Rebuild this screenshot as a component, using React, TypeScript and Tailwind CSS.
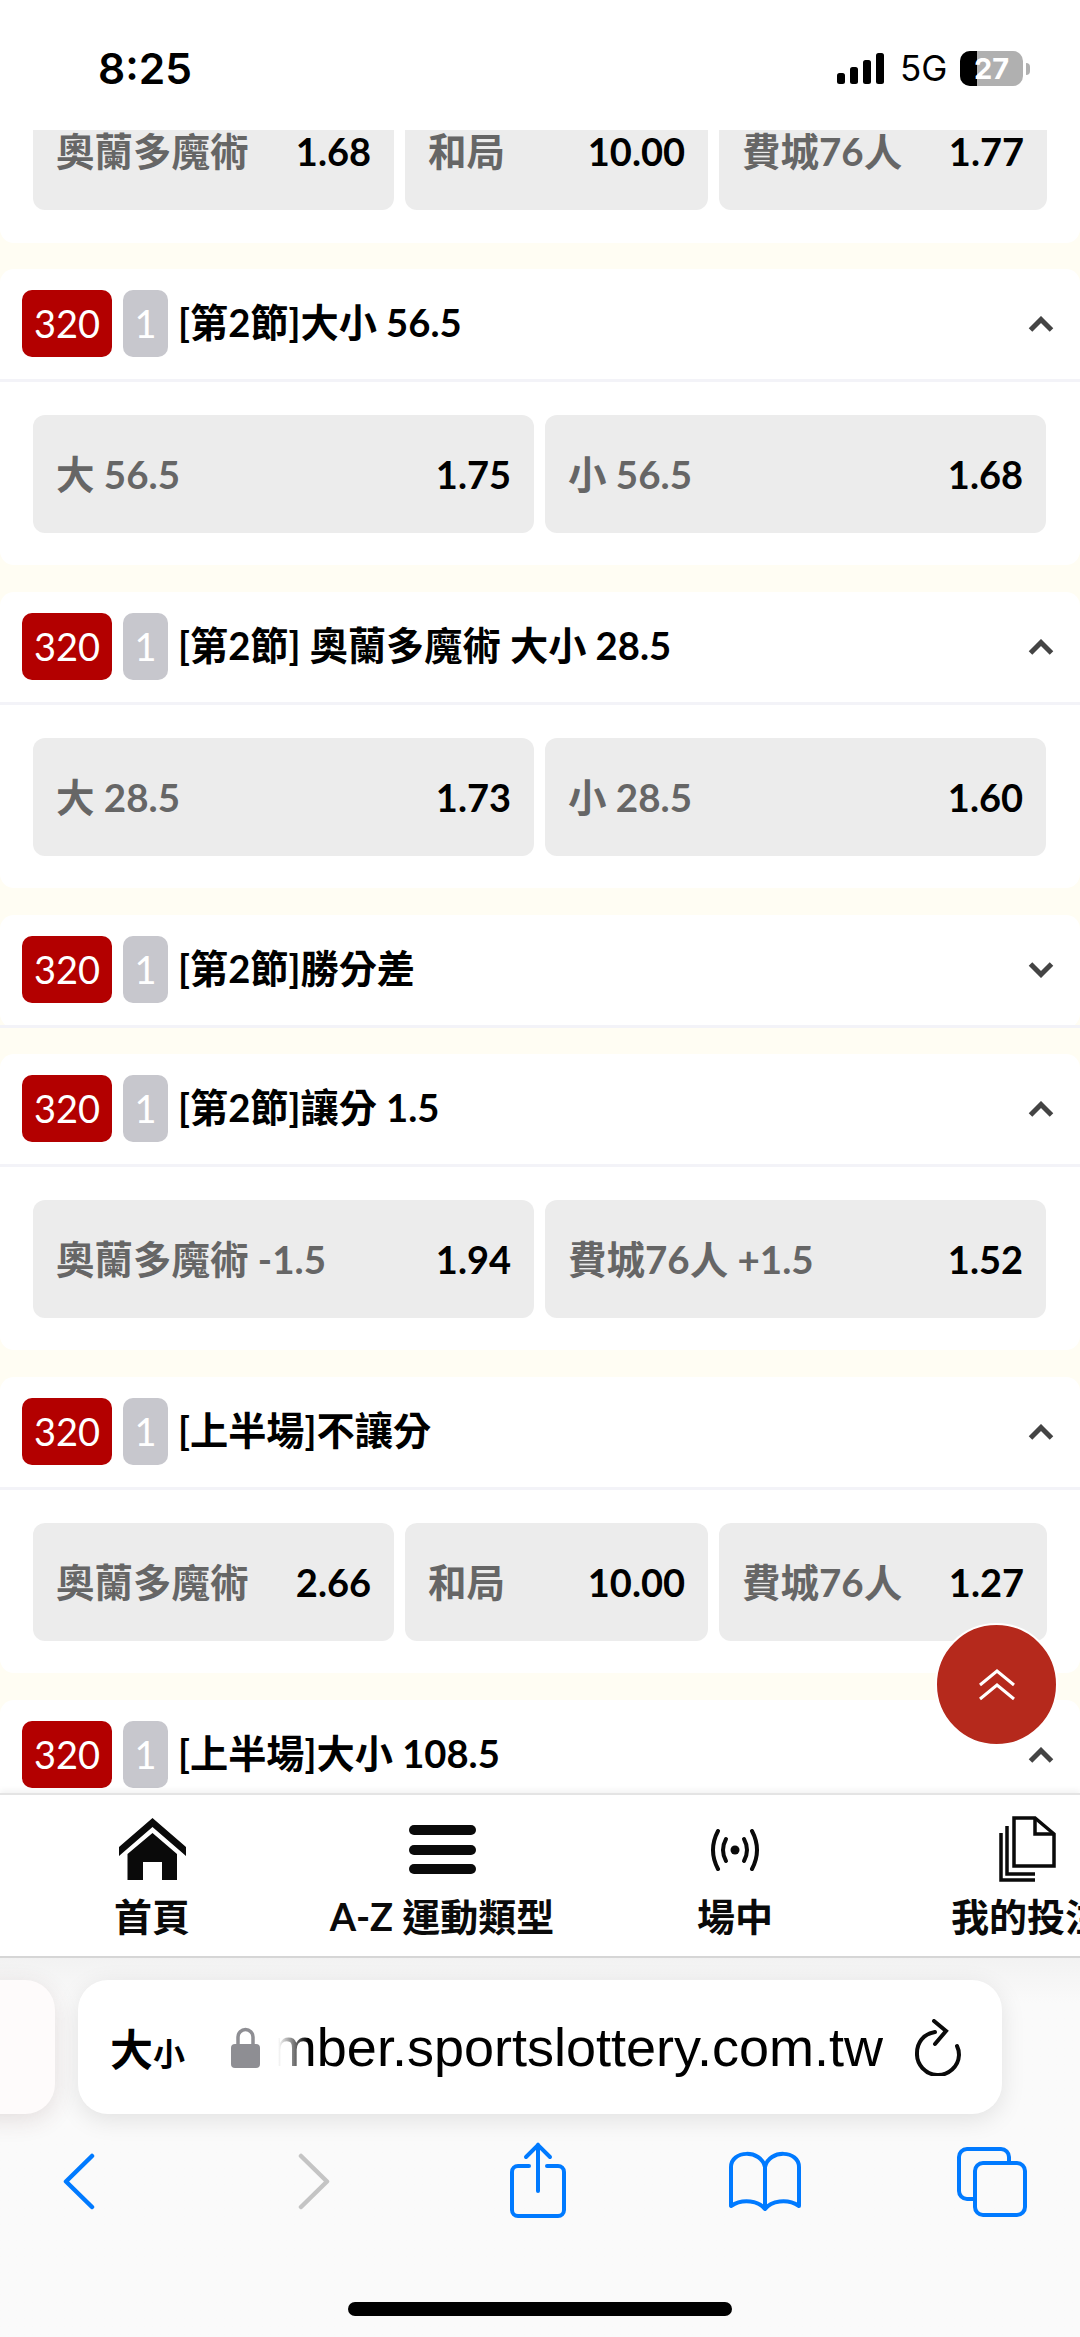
const font = { fontFamily: 'Lato, "Noto Sans CJK TC", sans-serif' };

type Odd = { label: string; value: string; w: string; cut?: boolean };
type Market = { title: string; open: boolean; odds?: Odd[] };

const two = "w-[501px]";

const markets: Market[] = [
  {
    title: "[第2節]大小 56.5",
    open: true,
    odds: [
      { label: "大 56.5", value: "1.75", w: two },
      { label: "小 56.5", value: "1.68", w: two },
    ],
  },
  {
    title: "[第2節] 奧蘭多魔術 大小 28.5",
    open: true,
    odds: [
      { label: "大 28.5", value: "1.73", w: two },
      { label: "小 28.5", value: "1.60", w: two },
    ],
  },
  { title: "[第2節]勝分差", open: false },
  {
    title: "[第2節]讓分 1.5",
    open: true,
    odds: [
      { label: "奧蘭多魔術 -1.5", value: "1.94", w: two },
      { label: "費城76人 +1.5", value: "1.52", w: two },
    ],
  },
  {
    title: "[上半場]不讓分",
    open: true,
    odds: [
      { label: "奧蘭多魔術", value: "2.66", w: "w-[361px]" },
      { label: "和局", value: "10.00", w: "w-[303px]" },
      { label: "費城76人", value: "1.27", w: "w-[328px]" },
    ],
  },
  { title: "[上半場]大小 108.5", open: true },
];

function Caret({ up }: { up: boolean }) {
  return (
    <svg width="26" height="16" viewBox="0 0 26 16" className={up ? "" : "rotate-180"}>
      <path d="M2.5 14 L13 3.5 L23.5 14" fill="none" stroke="#444" strokeWidth="5" />
    </svg>
  );
}

function OddCard({ label, value, w, cut }: Odd) {
  // cut = the row scrolled under the status bar, only its lower part shows
  return (
    <div
      className={`${w} ${
        cut ? "h-[80px] pb-[38px] rounded-b-[12px]" : "h-[118px] rounded-[12px]"
      } shrink-0 bg-[#ececec] px-[23px] flex items-center justify-between`}
    >
      <span className="text-[38.5px] leading-none font-bold text-[#666] whitespace-nowrap">{label}</span>
      <span className="text-[38px] leading-none font-bold text-black">{value}</span>
    </div>
  );
}

function Section({ m }: { m: Market }) {
  return (
    <div className={`${m.odds ? "mb-[27px]" : "mb-[26px]"} rounded-[14px] bg-white shrink-0`}>
      <div className="h-[113px] pl-[22px] pr-[26px] border-b-[3px] border-[#f3f3f8] flex items-center">
        <span className="w-[90px] h-[67px] mb-[2px] rounded-[10px] bg-[#b30000] text-white text-[38px] flex items-center justify-center">
          320
        </span>
        <span className="ml-[11px] w-[45px] h-[67px] mb-[2px] rounded-[10px] bg-[#c7c7cd] text-white text-[38px] flex items-center justify-center">
          1
        </span>
        <span className="ml-[10px] mb-[2px] text-[38.2px] font-bold text-black whitespace-nowrap">{m.title}</span>
        <span className="ml-auto flex">
          <Caret up={m.open} />
        </span>
      </div>
      {m.odds && (
        <div className="pt-[33px] pb-[32px] px-[33px] flex gap-[11px]">
          {m.odds.map((o) => (
            <OddCard key={o.label} {...o} />
          ))}
        </div>
      )}
    </div>
  );
}

function StatusBar() {
  return (
    <div className="h-[130px] shrink-0 bg-white pl-[98px] pt-[48px] flex items-start relative z-10">
      <span className="text-[42.5px] leading-[42px] font-semibold text-black" style={{ fontFamily: "Inter, sans-serif" }}>
        8:25
      </span>
      <div className="ml-auto mr-[50px] mt-[3px] flex items-center">
        <svg width="47" height="31" viewBox="0 0 47 31">
          <rect x="0" y="20" width="8" height="11" rx="2.5" />
          <rect x="13" y="14" width="8" height="17" rx="2.5" />
          <rect x="26" y="7" width="8" height="24" rx="2.5" />
          <rect x="39" y="0" width="8" height="31" rx="2.5" />
        </svg>
        <span className="ml-[16px] w-[46px] text-[35px] leading-none text-black" style={{ fontFamily: "Inter, sans-serif" }}>
          5G
        </span>
        <div className="ml-[14px] relative w-[63px] h-[35px] rounded-[10px] bg-[#b0b0b0] overflow-hidden flex items-center justify-center">
          <div className="absolute left-0 top-0 bottom-0 w-[17px] bg-black" />
          <span className="relative text-[29px] leading-none font-bold text-white" style={{ fontFamily: "Inter, sans-serif" }}>
            27
          </span>
        </div>
        <div className="ml-[3px] w-[4px] h-[12px] rounded-r-full bg-[#b0b0b0]" />
      </div>
    </div>
  );
}

function NavBar() {
  return (
    <div className="h-[165px] shrink-0 bg-white border-t-[2px] border-b-[2px] border-t-[#e4e4e4] border-b-[#d6d6d6] flex overflow-hidden relative z-10 shadow-[0_-3px_6px_rgba(0,0,0,0.05)]">
      <div className="w-[304px] shrink-0 flex flex-col items-center">
        <div className="h-[95px] pt-[23px]">
          <svg width="67" height="62" viewBox="0 0 67 62">
            <path d="M33.5 0 L67 29 V38 L33.5 9 L0 38 V29 Z" fill="#0a0a0a" />
            <path d="M33.5 15 L58 36 V62 H43 V44 H24 V62 H8.5 V36 Z" fill="#0a0a0a" />
          </svg>
        </div>
        <span className="text-[38px] leading-[52px] font-bold text-[#0a0a0a]">首頁</span>
      </div>
      <div className="w-[276px] shrink-0 flex flex-col items-center">
        <div className="h-[95px] pt-[30px]">
          <svg width="67" height="50" viewBox="0 0 67 50">
            <rect x="0" y="0" width="67" height="10" rx="5" fill="#0a0a0a" />
            <rect x="0" y="20" width="67" height="10" rx="5" fill="#0a0a0a" />
            <rect x="0" y="39" width="67" height="10" rx="5" fill="#0a0a0a" />
          </svg>
        </div>
        <span className="text-[38px] leading-[52px] font-bold text-[#0a0a0a] whitespace-nowrap">A-Z 運動類型</span>
      </div>
      <div className="w-[310px] shrink-0 flex flex-col items-center">
        <div className="h-[95px] pt-[34px]">
          <svg width="50" height="42" viewBox="0 0 50 42" fill="none" stroke="#0a0a0a" strokeWidth="4" strokeLinecap="round">
            <circle cx="25" cy="21" r="4.5" fill="#0a0a0a" stroke="none" />
            <path d="M16 10 Q10 21 16 32" />
            <path d="M34 10 Q40 21 34 32" />
            <path d="M8 2 Q-2 21 8 40" />
            <path d="M42 2 Q52 21 42 40" />
          </svg>
        </div>
        <span className="text-[38px] leading-[52px] font-bold text-[#0a0a0a]">場中</span>
      </div>
      <div className="w-[274px] shrink-0 flex flex-col items-center">
        <div className="h-[95px] pt-[21px]">
          <svg width="57" height="66" viewBox="0 0 57 66" fill="none" stroke="#0a0a0a" strokeWidth="3.5">
            <path d="M36 2 H15 V50 H55 V18 Z" />
            <path d="M36 2 V18 H55" />
            <path d="M8 10 V58 H36" />
            <path d="M2 17 V64 H36" />
          </svg>
        </div>
        <span className="text-[38px] leading-[52px] font-bold text-[#0a0a0a] whitespace-nowrap">我的投注</span>
      </div>
    </div>
  );
}

function SafariBar() {
  return (
    <div className="flex-1 bg-gradient-to-b from-[#f2f2f2] to-[#fafafa] to-[12%] flex flex-col">
      <div className="pt-[22px] flex gap-[23px] -ml-[40px]">
        <div className="w-[95px] h-[134px] rounded-[30px] bg-[#fefbfb] shadow-[0_6px_24px_rgba(90,50,50,0.14)]" />
        <div className="w-[924px] h-[134px] rounded-[30px] bg-white shadow-[0_6px_24px_rgba(0,0,0,0.1)] pl-[32px] pr-[41px] flex items-center">
          <span className="w-[121px] shrink-0 flex items-baseline font-bold text-black" style={{ fontFamily: '"Noto Sans CJK TC", sans-serif' }}>
            <span className="text-[43px] leading-none">大</span>
            <span className="text-[32px] leading-none">小</span>
          </span>
          <svg width="29" height="41" viewBox="0 0 29 41" className="shrink-0">
            <path d="M7 18 V10 a7.5 7.5 0 0 1 15 0 V18" fill="none" stroke="#8e8e93" strokeWidth="3.5" />
            <rect x="0" y="17" width="29" height="24" rx="4" fill="#8e8e93" />
          </svg>
          <div className="relative ml-[18px] w-[605px] shrink-0 overflow-hidden flex justify-end">
            <span className="text-[54px] leading-[66px] text-black whitespace-nowrap" style={{ fontFamily: '"Liberation Sans", sans-serif' }}>
              mber.sportslottery.com.tw
            </span>
            <div className="absolute left-0 top-0 bottom-0 w-[30px] bg-gradient-to-r from-white to-white/0" />
          </div>
          <svg width="46" height="57" viewBox="0 0 46 57" className="ml-auto shrink-0" fill="none" stroke="#0a0a0a" strokeWidth="4" strokeLinecap="round">
            <path d="M20 13 C8 15 2 24 2 34 A21 21 0 0 0 44 36 C44 32 43 29 42 27" />
            <path d="M19 2 L31 12 L20 25" />
          </svg>
        </div>
      </div>
      <div className="mt-[27px] h-[76px] relative">
        <svg className="absolute left-[63px] top-[12px]" width="32" height="57" viewBox="0 0 32 57" fill="none" stroke="#007aff" strokeWidth="4.5" strokeLinecap="round" strokeLinejoin="round">
          <path d="M29 3 L3 28.5 L29 54" />
        </svg>
        <svg className="absolute left-[298px] top-[12px]" width="32" height="57" viewBox="0 0 32 57" fill="none" stroke="#c4c4c4" strokeWidth="4.5" strokeLinecap="round" strokeLinejoin="round">
          <path d="M3 3 L29 28.5 L3 54" />
        </svg>
        <svg className="absolute left-[510px] top-[1px]" width="56" height="76" viewBox="0 0 56 76" fill="none" stroke="#007aff" strokeWidth="4" strokeLinecap="round">
          <path d="M19 24 H8 A6 6 0 0 0 2 30 V68 A6 6 0 0 0 8 74 H48 A6 6 0 0 0 54 68 V30 A6 6 0 0 0 48 24 H37" />
          <path d="M28 3 V49" />
          <path d="M16 15 L28 3 L40 15" />
        </svg>
        <svg className="absolute left-[729px] top-[10px]" width="72" height="62" viewBox="0 0 72 62" fill="none" stroke="#007aff" strokeWidth="4" strokeLinejoin="round">
          <path d="M36 58 C30 50 14 47 2 55 V16 C2 -1 32 -2 36 16 C40 -2 70 -1 70 16 V55 C58 47 42 50 36 58 Z" />
          <path d="M36 16 V58" />
        </svg>
        <svg className="absolute left-[957px] top-[6px]" width="70" height="70" viewBox="0 0 70 70" fill="none" stroke="#007aff" strokeWidth="4">
          <path d="M17 52 H10 A8 8 0 0 1 2 44 V10 A8 8 0 0 1 10 2 H44 A8 8 0 0 1 52 10 V16" />
          <rect x="18" y="16" width="50" height="52" rx="8" />
        </svg>
      </div>
      <div className="mt-[85px] mx-auto w-[384px] h-[14px] rounded-full bg-black" />
    </div>
  );
}

export default function App() {
  return (
    <div className="relative w-[1080px] h-[2337px] overflow-hidden flex flex-col bg-white" style={font}>
      <StatusBar />

      {/* scroll area, cut off by the status bar and the nav */}
      <div className="h-[1663px] shrink-0 overflow-hidden bg-[#fffdf3] flex flex-col">
        <div className="mb-[26px] shrink-0 rounded-b-[14px] bg-white pb-[33px] px-[33px] flex gap-[11px]">
          <OddCard cut label="奧蘭多魔術" value="1.68" w="w-[361px]" />
          <OddCard cut label="和局" value="10.00" w="w-[303px]" />
          <OddCard cut label="費城76人" value="1.77" w="w-[328px]" />
        </div>
        {markets.map((m) => (
          <Section key={m.title} m={m} />
        ))}
      </div>

      <NavBar />
      <SafariBar />

      {/* back to top */}
      <div className="absolute left-[935px] top-[1623px] w-[123px] h-[123px] rounded-full bg-[#b5291c] border-[2px] border-white flex items-center justify-center">
        <svg width="38" height="32" viewBox="0 0 38 32" fill="none" stroke="white" strokeWidth="3">
          <path d="M2 16 L19 2 L36 16" />
          <path d="M2 30 L19 16 L36 30" />
        </svg>
      </div>
    </div>
  );
}
